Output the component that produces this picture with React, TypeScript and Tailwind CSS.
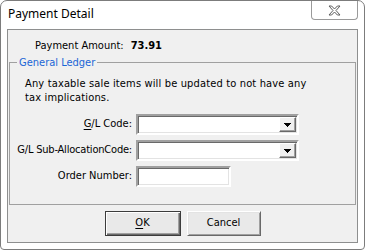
import React from 'react';

const ui = { fontFamily: '"DejaVu Sans Condensed", "DejaVu Sans", sans-serif' };

function CloseGlyph() {
  return (
    <svg width="13" height="11" viewBox="-1 -1 13 11">
      <polygon
        points="0,0 2.6,0 5.5,3 8.4,0 11,0 7,4.5 11,9 8.4,9 5.5,6 2.6,9 0,9 4,4.5"
        fill="#fff"
        stroke="#5c5c5c"
        strokeWidth="1"
        strokeLinejoin="round"
      />
    </svg>
  );
}

function ComboBox() {
  return (
    <div className="w-[163px] h-[21px] bg-white border-2 border-t-[#a0a0a0] border-l-[#a0a0a0] border-b-white border-r-white shadow-[inset_1px_1px_0_#696969,inset_-1px_-1px_0_#e3e3e3] flex justify-end p-[1px]">
      <div className="w-[17px] h-full bg-[#f0f0f0] border border-t-white border-l-white border-b-[#696969] border-r-[#696969] shadow-[inset_-1px_-1px_0_#a0a0a0] flex items-center justify-center">
        <svg width="7" height="4" viewBox="0 0 7 4" shapeRendering="crispEdges">
          <rect x="0" y="0" width="7" height="1" fill="#000" />
          <rect x="1" y="1" width="5" height="1" fill="#000" />
          <rect x="2" y="2" width="3" height="1" fill="#000" />
          <rect x="3" y="3" width="1" height="1" fill="#000" />
        </svg>
      </div>
    </div>
  );
}

function TextBox() {
  return (
    <div className="w-[95px] h-[21px] bg-white border-2 border-t-[#a0a0a0] border-l-[#a0a0a0] border-b-white border-r-white shadow-[inset_1px_1px_0_#696969,inset_-1px_-1px_0_#e3e3e3]" />
  );
}

export default function App() {
  return (
    <div className="w-[365px] h-[250px] bg-white">
      <div className="w-[365px] h-[250px] bg-white border border-[#7c7c7c] rounded-t-[7px] rounded-b-[4px] overflow-hidden flex flex-col">
        {/* Title bar */}
        <div className="h-[28px] flex justify-between items-start">
          <span className="pl-[7px] pt-[5px] text-[12px] leading-[16px] text-black" style={{ fontFamily: '"Noto Sans", sans-serif' }}>
            Payment Detail
          </span>
          <div className="mr-[6px] w-[47px] h-[19px] border-x border-b border-[#9a9a9a] rounded-b-[4px] bg-white flex items-center justify-center">
            <CloseGlyph />
          </div>
        </div>

        {/* Client area */}
        <div className="mx-[6px] h-[214px] border border-[#8e8f8f] bg-[#f0f0f0] flex flex-col text-[11px] text-black" style={ui}>
          <div className="pt-[9px] pl-[27px] leading-[13px] flex gap-[7px]">
            <span>Payment Amount:</span>
            <span className="font-bold">73.91</span>
          </div>

          <fieldset className="mt-[4px] mx-[1px] border border-[#a0a0a0] pb-[17px]">
            <legend className="ml-[7px] px-[2px] leading-[13px] text-[#1a66d6]">General Ledger</legend>
            <div className="pt-[8px] pl-[15px] leading-[14px] tracking-[0.15px]">
              <div>Any taxable sale items will be updated to not have any</div>
              <div>tax implications.</div>
            </div>
            <div className="mt-[9px] flex flex-col gap-[5px]">
              <div className="flex items-center">
                <span className="w-[122px] text-right">
                  <u className="underline-offset-2">G</u>/L Code:
                </span>
                <div className="ml-[4px]">
                  <ComboBox />
                </div>
              </div>
              <div className="flex items-center">
                <span className="w-[122px] text-right tracking-[-0.2px]">G/L Sub-AllocationCode:</span>
                <div className="ml-[4px]">
                  <ComboBox />
                </div>
              </div>
              <div className="flex items-center">
                <span className="w-[122px] text-right">Order Number:</span>
                <div className="ml-[4px]">
                  <TextBox />
                </div>
              </div>
            </div>
          </fieldset>

          <div className="mt-[6px] flex justify-center gap-[6px]">
            <button className="w-[76px] h-[25px] bg-[#e9e9e9] border border-[#3c3c3c] shadow-[inset_1px_1px_0_#fff,inset_-1px_-1px_0_#696969,inset_-2px_-2px_0_#a0a0a0]">
              <u className="underline-offset-2">O</u>K
            </button>
            <button className="w-[74px] h-[25px] bg-[#e9e9e9] border border-t-white border-l-white border-b-[#696969] border-r-[#696969] shadow-[inset_1px_1px_0_#e3e3e3,inset_-1px_-1px_0_#a0a0a0]">
              Cancel
            </button>
          </div>
        </div>
      </div>
    </div>
  );
}
